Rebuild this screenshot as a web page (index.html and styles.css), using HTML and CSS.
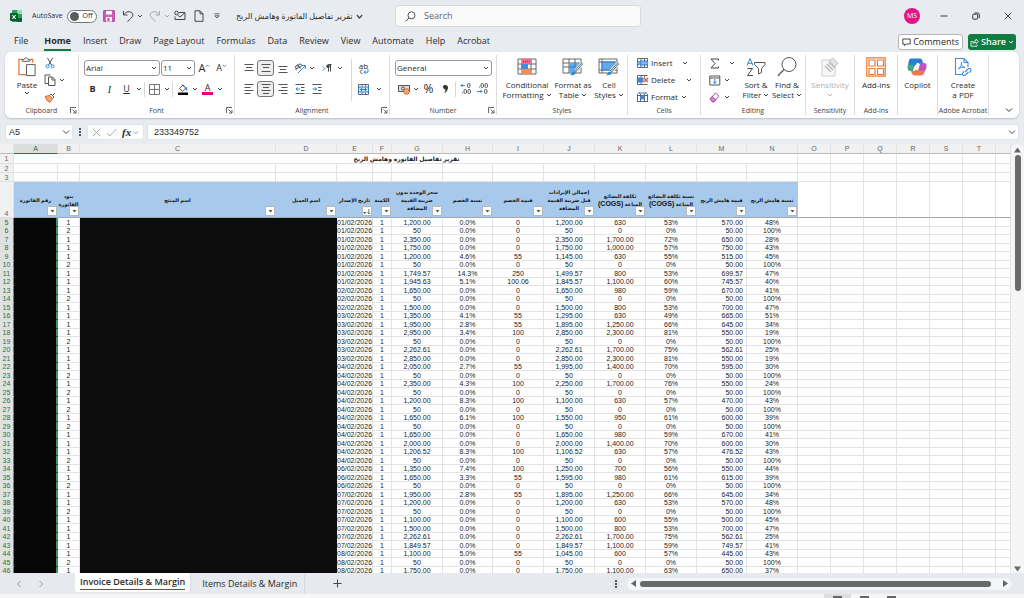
FILE: index.html
```html
<!DOCTYPE html>
<html lang="en">
<head>
<meta charset="utf-8">
<title>Invoice Details &amp; Margin</title>
<link rel="stylesheet" href="styles.css">
</head>
<body>
<svg class="defs" aria-hidden="true">
  <symbol id="chev" viewBox="0 0 6 6"><path d="M1 2l2 2 2-2" fill="none" stroke="#444" stroke-width="1"/></symbol>
  <symbol id="launch" viewBox="0 0 7 7"><path d="M.5 6V.5H6M2.500 2.500L6 6M6 3v3H3" fill="none" stroke="#555" stroke-width=".9"/></symbol>
</svg>

<header class="titlebar">
  <svg class="logo" width="12" height="12" viewBox="0 0 12 12"><rect x="2" width="10" height="12" rx="1" fill="#21a366"/><path d="M7 0h4a1 1 0 0 1 1 1v3H7z" fill="#8fe0a8"/><path d="M7 8h5v3a1 1 0 0 1-1 1H7z" fill="#185c37"/><rect y="3" width="8" height="8" rx="1" fill="#0b5a31"/><path d="M2.300 5l3.400 4M5.700 5L2.300 9" stroke="#fff" stroke-width="1.100"/></svg>
  <label class="autosave">AutoSave <input type="checkbox" class="toggle-input"><span class="toggle"><i></i>Off</span></label>
  <button class="qa" aria-label="Save"><svg width="12" height="12" viewBox="0 0 12 12"><path d="M.7.700h10.600v10.600H.7z" fill="#d65cc0" stroke="#a33f96"/><path d="M3 1h6v3.500H3z" fill="#fff"/><path d="M3 7h6v4.500H3z" fill="#fff"/><path d="M4.500 8v3h2V8" fill="#b146a5"/></svg></button>
  <button class="qa undo" aria-label="Undo"><svg width="12" height="12" viewBox="0 0 12 12"><path d="M1.500 1v4h4M1.700 4.700C4 1.500 8 .8 10 3c2 2.500 0 4.500-4.500 8.500" fill="none" stroke="#444"/></svg><svg width="6" height="6"><use href="#chev"/></svg></button>
  <button class="qa undo faded" aria-label="Redo"><svg width="12" height="12" viewBox="0 0 12 12"><path d="M10.500 1v4h-4M10.300 4.700C8 1.500 4 .8 2 3c-2 2.500 0 4.500 4.500 8.500" fill="none" stroke="#444"/></svg><svg width="6" height="6"><use href="#chev"/></svg></button>
  <button class="qa mail" aria-label="Email"><svg width="12" height="12" viewBox="0 0 12 12"><path d="M5 2.500h6v7H1v-3M11 2.500L6 7 3.500 5" fill="none" stroke="#444"/><circle cx="2.500" cy="3" r="1.800" fill="none" stroke="#444"/></svg></button>
  <button class="qa newf" aria-label="New"><svg width="10" height="12" viewBox="0 0 10 12"><path d="M1 .8h5l3 3v7.500H1zM6 .8v3h3" fill="none" stroke="#444"/></svg></button>
  <button class="qa cust" aria-label="Customize"><svg width="6" height="6" viewBox="0 0 6 6"><path d="M.5.800h5M.8 2.800h4.400L3 5z" fill="none" stroke="#444" stroke-width=".8"/></svg></button>
  <button class="doc"><span dir="rtl" lang="ar">تقرير تفاصيل الفاتورة وهامش الربح</span><svg width="9" height="9" viewBox="0 0 6 6"><path d="M1.200 2l1.800 2 1.800-2" fill="none" stroke="#444" stroke-width=".8"/></svg></button>
  <label class="search"><svg width="11" height="11" viewBox="0 0 11 11"><circle cx="6.500" cy="4.300" r="3.500" fill="none" stroke="#555"/><path d="M4 7L.8 10.300" stroke="#555"/></svg><input type="search" placeholder="Search" aria-label="Search"></label>
  <div class="window">
    <span class="avatar">MS</span>
    <button aria-label="Minimize"><svg width="8" height="8" viewBox="0 0 8 8"><path d="M.5 4h7" stroke="#333"/></svg></button>
    <button aria-label="Restore"><svg width="8" height="8" viewBox="0 0 8 8"><rect x=".7" y="2.200" width="5" height="5" rx="1" fill="none" stroke="#333"/><path d="M2.500 1h3.300a1.500 1.500 0 0 1 1.500 1.500V6" fill="none" stroke="#333"/></svg></button>
    <button aria-label="Close"><svg width="8" height="8" viewBox="0 0 8 8"><path d="M.8.800l6.400 6.400M7.200.800L.8 7.200" stroke="#333" stroke-width=".9"/></svg></button>
  </div>
</header>

<nav class="tabs">
  <button>File</button><button class="on">Home</button><button>Insert</button><button>Draw</button><button>Page Layout</button><button>Formulas</button><button>Data</button><button>Review</button><button>View</button><button>Automate</button><button>Help</button><button>Acrobat</button>
  <div class="tab-actions">
    <button class="comments"><svg width="9" height="9" viewBox="0 0 9 9"><path d="M.8 1h7.400v5H4L2.300 7.800V6H.8z" fill="none" stroke="#333" stroke-width=".9"/></svg>Comments</button>
    <button class="share"><svg width="9" height="9" viewBox="0 0 9 9"><path d="M3 3.500H1v4.700h6V6.500M3 5.500C3.200 3.500 4.500 2.700 6 2.700V1l2.500 2.500L6 5.500V4.300C4.500 4.300 3.700 4.700 3 5.500z" fill="none" stroke="#fff" stroke-width=".8"/></svg>Share<svg width="6" height="6" viewBox="0 0 6 6"><path d="M1 2l2 2 2-2" fill="none" stroke="#fff"/></svg></button>
  </div>
</nav>

<section class="ribbon">
  <div class="group g-clip">
    <div class="body">
      <button class="big paste"><svg width="20" height="21" viewBox="0 0 20 21"><path d="M5 2.500H1.500v16H9M13 2.500h3V6" fill="none" stroke="#e8793a" stroke-width="1.300"/><path d="M5 4.500v-2h2.200C7.500.200 10.500.200 10.800 2.500H13v2z" fill="#fff" stroke="#555"/><path d="M9.500 8h9v11.500h-9z" fill="#fff" stroke="#555"/></svg><span>Paste</span><svg width="6" height="6"><use href="#chev"/></svg></button>
      <div class="stack">
        <button aria-label="Cut"><svg width="12" height="12" viewBox="0 0 12 12"><path d="M3.500 1l4 7M8.500 1l-4 7" stroke="#555"/><circle cx="3.500" cy="9.300" r="1.500" fill="none" stroke="#2b88d8"/><circle cx="8.500" cy="9.300" r="1.500" fill="none" stroke="#2b88d8"/></svg></button>
        <button aria-label="Copy"><svg width="12" height="12" viewBox="0 0 12 12"><path d="M4.500 9.500H1V1h5.500M4.500 3h4L11 5.500v6H4.500zM8 3v3h3" fill="none" stroke="#555"/></svg><svg width="6" height="6"><use href="#chev"/></svg></button>
        <button aria-label="Format painter"><svg width="12" height="12" viewBox="0 0 12 12"><path d="M1 5.500l4.500-1 3 3L6 11.300 3 9.500z" fill="#f4a477" stroke="#e06a2c"/><path d="M5.500 4.500L7 3l3 3-1.500 1.500M8.500 4.500L11 2" fill="none" stroke="#555"/></svg></button>
      </div>
    </div>
    <div class="label">Clipboard<svg class="launch" width="7" height="7"><use href="#launch"/></svg></div>
  </div>

  <div class="group g-font">
    <div class="body rows">
      <div class="line">
        <span class="combo w-font"><select aria-label="Font"><option>Arial</option></select><svg width="6" height="6"><use href="#chev"/></svg></span>
        <span class="combo w-size"><select aria-label="Font size"><option>11</option></select><svg width="6" height="6"><use href="#chev"/></svg></span>
        <button class="s17 grow">A<svg width="5" height="5" viewBox="0 0 5 5"><path d="M1 3.500L2.500 2 4 3.500" fill="none" stroke="#2b88d8"/></svg></button>
        <button class="s17 shrink">A<svg width="5" height="5" viewBox="0 0 5 5"><path d="M1 2l1.500 1.500L4 2" fill="none" stroke="#2b88d8"/></svg></button>
      </div>
      <div class="line">
        <button class="s17"><b>B</b></button><button class="s17"><i class="it">I</i></button><button class="s17"><u>U</u></button><button class="s8" aria-label="Underline options"><svg width="6" height="6"><use href="#chev"/></svg></button>
        <span class="vr"></span>
        <button class="s17" aria-label="Borders"><svg width="11" height="11" viewBox="0 0 11 11"><path d="M.5.500h10v10H.5zM5.500.500v10M.5 5.500h10" fill="none" stroke="#777"/></svg></button><button class="s8" aria-label="Border options"><svg width="6" height="6"><use href="#chev"/></svg></button>
        <span class="vr"></span>
        <button class="s17" aria-label="Fill"><svg width="12" height="12" viewBox="0 0 12 12"><path d="M2.500 5.500L6 2l3 3-3.500 3.300zM5 1.500l3 3" fill="none" stroke="#555"/><path d="M9.500 4.500v3" stroke="#2b88d8" stroke-width="1.500"/><path d="M1 9.500h10V12H1z" fill="#000"/></svg></button><button class="s8" aria-label="Fill options"><svg width="6" height="6"><use href="#chev"/></svg></button>
        <button class="s17 fcolor">A</button><button class="s8" aria-label="Color options"><svg width="6" height="6"><use href="#chev"/></svg></button>
      </div>
    </div>
    <div class="label">Font<svg class="launch" width="7" height="7"><use href="#launch"/></svg></div>
  </div>

  <div class="group g-align">
    <div class="body">
      <div class="rows main">
        <div class="line">
          <button class="s17" aria-label="Top"><svg width="10" height="10" viewBox="0 0 10 10"><path d="M.5 1.500h9M2 4.500h6M.5 7.500h9" stroke="#555"/></svg></button>
          <button class="s17 sel" aria-label="Middle"><svg width="10" height="10" viewBox="0 0 10 10"><path d="M.5 1.500h9M2 4.500h6M.5 8.500h9" stroke="#555"/></svg></button>
          <button class="s17" aria-label="Bottom"><svg width="10" height="10" viewBox="0 0 10 10"><path d="M.5 3.500h9M2 6.500h6M.5 9.500h9" stroke="#555"/></svg></button>
          <button class="s17" aria-label="Orientation"><svg width="12" height="12" viewBox="0 0 12 12"><path d="M4 11l7-7M8 3.500h3.300V7" fill="none" stroke="#2b88d8"/><circle cx="3" cy="5" r="1.500" fill="none" stroke="#555"/><circle cx="6" cy="3.500" r="1.500" fill="none" stroke="#555"/><path d="M3.500 2l3 5M1 7l2 1" stroke="#555" stroke-width=".8"/></svg></button><button class="s8" aria-label="Orientation options"><svg width="6" height="6"><use href="#chev"/></svg></button>
          <button class="s17 para" aria-label="Direction"><svg width="11" height="10" viewBox="0 0 11 10"><path d="M.8 3.500l2 2-2 2" fill="none" stroke="#2b88d8"/><path d="M6.500 8.500v-7H9.500M8.500 1.500v7" fill="none" stroke="#444"/><circle cx="6" cy="3.300" r="1.800" fill="#444"/></svg></button><button class="s8" aria-label="Direction options"><svg width="6" height="6"><use href="#chev"/></svg></button>
        </div>
        <div class="line">
          <button class="s17" aria-label="Left"><svg width="10" height="10" viewBox="0 0 10 10"><path d="M.5.500h9M.5 3.500h6M.5 6.500h9M.5 9.500h6" stroke="#555"/></svg></button>
          <button class="s17 sel" aria-label="Center"><svg width="10" height="10" viewBox="0 0 10 10"><path d="M.5.500h9M2 3.500h6M.5 6.500h9M2 9.500h6" stroke="#555"/></svg></button>
          <button class="s17" aria-label="Right"><svg width="10" height="10" viewBox="0 0 10 10"><path d="M.5.500h9M3.500 3.500h6M.5 6.500h9M3.500 9.500h6" stroke="#555"/></svg></button>
          <button class="s17" aria-label="Decrease indent"><svg width="10" height="10" viewBox="0 0 10 10"><path d="M.5.500h9M6 3.500h3.500M6 6.500h3.500M.5 9.500h9" stroke="#555"/><path d="M5 5H1M2.500 3.300L1 5l1.500 1.700" fill="none" stroke="#2b88d8"/></svg></button>
          <button class="s17" aria-label="Increase indent"><svg width="10" height="10" viewBox="0 0 10 10"><path d="M.5.500h9M6 3.500h3.500M6 6.500h3.500M.5 9.500h9" stroke="#555"/><path d="M.5 5h4M3 3.300L4.500 5 3 6.700" fill="none" stroke="#2b88d8"/></svg></button>
        </div>
      </div>
      <span class="vr tall"></span>
      <div class="rows">
        <div class="line"><button class="s17 wrap">ab<svg width="10" height="6" viewBox="0 0 10 6"><path d="M3.500 1.200C.5.500.5 5 3.500 4.400" fill="none" stroke="#555"/><path d="M9 0v3.200H5M6.500 1.500L5 3.200l1.500 1.700" fill="none" stroke="#2b88d8"/></svg></button></div>
        <div class="line"><button class="s17" aria-label="Merge"><svg width="11" height="11" viewBox="0 0 11 11"><path d="M.5.500h10v10H.5zM4 .5v2M7.500.500v2M4 8.500v2M7.500 8.500v2" fill="none" stroke="#666"/><path d="M.5 3h10v5H.5z" fill="#cfe4f7" stroke="#2b7cd3"/><path d="M2.500 5.500h6M4 4L2.500 5.500 4 7M7 4l1.500 1.500L7 7" fill="none" stroke="#2b7cd3"/></svg></button><button class="s12" aria-label="Merge options"><svg width="6" height="6"><use href="#chev"/></svg></button></div>
      </div>
    </div>
    <div class="label">Alignment<svg class="launch" width="7" height="7"><use href="#launch"/></svg></div>
  </div>

  <div class="group g-num">
    <div class="body rows">
      <div class="line"><span class="combo w-num"><select aria-label="Number format"><option>General</option></select><svg width="6" height="6"><use href="#chev"/></svg></span></div>
      <div class="line">
        <button class="s17" aria-label="Accounting"><svg width="12" height="11" viewBox="0 0 12 11"><path d="M.5 1.500h11v6H.5z" fill="#ddd" stroke="#555"/><circle cx="5" cy="4.500" r="1.500" fill="none" stroke="#555"/><ellipse cx="8.500" cy="6" rx="2.500" ry="1.200" fill="#f4a477" stroke="#e06a2c" stroke-width=".8"/><path d="M6 6v3c0 1.800 5 1.800 5 0V6" fill="#f4a477" stroke="#e06a2c" stroke-width=".8"/></svg></button><button class="s8" aria-label="Accounting options"><svg width="6" height="6"><use href="#chev"/></svg></button>
        <button class="s17 pct">%</button><button class="s17" aria-label="Comma style"><svg width="7" height="10" viewBox="0 0 7 10"><path d="M1 2.500C1 .5 6 0 6 3.500 6 6.500 4 8.500 2 9.500c1-1.500 1.500-2.500 1.500-4C2 5.500 1 4.500 1 2.500z" fill="#333"/></svg></button><span class="vr"></span>
        <button class="s17" aria-label="Increase decimal"><svg width="11" height="12" viewBox="0 0 11 12"><path d="M5 2.500H1M2.500 1L1 2.500 2.500 4" fill="none" stroke="#2b88d8"/><rect x="7.500" y=".5" width="2.500" height="4" rx="1.200" fill="none" stroke="#555"/><rect x="4" y="6.500" width="2.500" height="4" rx="1.200" fill="none" stroke="#555"/><rect x="8" y="6.500" width="2.500" height="4" rx="1.200" fill="none" stroke="#555"/><path d="M2 10h1" stroke="#555"/></svg></button>
        <button class="s17" aria-label="Decrease decimal"><svg width="11" height="12" viewBox="0 0 11 12"><path d="M0 8.500h5M3.500 7L5 8.500 3.500 10" fill="none" stroke="#2b88d8"/><rect x="4" y=".5" width="2.500" height="4" rx="1.200" fill="none" stroke="#555"/><rect x="8" y=".5" width="2.500" height="4" rx="1.200" fill="none" stroke="#555"/><rect x="7.500" y="6.500" width="2.500" height="4" rx="1.200" fill="none" stroke="#555"/><path d="M2 4h1" stroke="#555"/></svg></button>
      </div>
    </div>
    <div class="label">Number<svg class="launch" width="7" height="7"><use href="#launch"/></svg></div>
  </div>

  <div class="group g-styles">
    <div class="body">
      <button class="big w-cond"><svg width="20" height="18" viewBox="0 0 20 18"><path d="M1 1h18v15H1zM1 6h18M1 11h18M5 1v15M14 1v15" fill="none" stroke="#666"/><path d="M5 1h9v5H5z" fill="#f2668b"/><path d="M4 6h7v5H4z" fill="#3b8ede"/><path d="M5 11h9v5H5z" fill="#f28c5a"/><path d="M6 3.500h7" stroke="#c2185b" stroke-dasharray="1 1"/></svg><span>Conditional<br>Formatting <svg width="6" height="6"><use href="#chev"/></svg></span></button>
      <button class="big w-fmt"><svg width="22" height="18" viewBox="0 0 22 18"><path d="M1 1h18v14H1zM1 5h18M1 9h18M7 1v14M13 1v14" fill="none" stroke="#666"/><path d="M7 5h12v5l-5 5H7z" fill="#63a9e6"/><path d="M7 9h12M13 5v8" stroke="#2b7cd3"/><path d="M20.500 5l-7 8" stroke="#fff" stroke-width="4"/><path d="M20.500 5L13 13.500" stroke="#555" stroke-width="2.200"/><path d="M20.500 5L13 13.500" stroke="#fff" stroke-width="1"/><path d="M7 17.500c3 0 2-4 5-4 3 1 2 4-5 4z" fill="#2b88d8"/></svg><span>Format as<br>Table <svg width="6" height="6"><use href="#chev"/></svg></span></button>
      <button class="big w-cell"><svg width="22" height="18" viewBox="0 0 22 18"><path d="M1 1h18v14H1zM1 4h18M4 1v14M1 12h18" fill="none" stroke="#666"/><path d="M4 4h13v8H4z" fill="#63a9e6" stroke="#2b7cd3"/><path d="M20.500 5l-7 8" stroke="#fff" stroke-width="4"/><path d="M20.500 5L13 13.500" stroke="#555" stroke-width="2.200"/><path d="M20.500 5L13 13.500" stroke="#fff" stroke-width="1"/><path d="M7 17.500c3 0 2-4 5-4 3 1 2 4-5 4z" fill="#2b88d8"/></svg><span>Cell<br>Styles <svg width="6" height="6"><use href="#chev"/></svg></span></button>
    </div>
    <div class="label">Styles</div>
  </div>

  <div class="group g-cells">
    <div class="body">
      <div class="stack">
        <button><svg width="11" height="10" viewBox="0 0 11 10"><path d="M.5.500h10v9H.5zM4 .5v9M7.500.500v9" fill="none" stroke="#666"/><path d="M3 3h8v4H3z" fill="#7db8ee" stroke="#2b7cd3"/><path d="M0 5h4M2 3L0 5l2 2" fill="none" stroke="#2b7cd3"/></svg><span class="t-ins">Insert</span><svg width="6" height="6"><use href="#chev"/></svg></button>
        <button><svg width="11" height="10" viewBox="0 0 11 10"><path d="M.5.500h10M.5 9.500h10M.5.500v9M4 .5v2M7.500.500v2M4 7.500v2" fill="none" stroke="#666"/><path d="M1 3h5v4H1z" fill="#3b8ede" stroke="#2b7cd3"/><path d="M7 3l4 4M11 3L7 7" stroke="#e0532c" stroke-width="1.300"/></svg><span class="t-del">Delete</span><svg width="6" height="6"><use href="#chev"/></svg></button>
        <button><svg width="11" height="10" viewBox="0 0 11 10"><path d="M.5 2v8M10.500 2v8M.5 3.500h10M.5 9.500h10M3.500 2v8M7.500 2v8" fill="none" stroke="#666"/><path d="M3.500 3.500h4v4h-4z" fill="#3b8ede"/><path d="M2 1h7M2 0v2M9 0v2" stroke="#2b7cd3"/></svg><span>Format</span><svg width="6" height="6"><use href="#chev"/></svg></button>
      </div>
    </div>
    <div class="label">Cells</div>
  </div>

  <div class="group g-edit">
    <div class="body">
      <div class="stack">
        <button aria-label="Sum"><svg width="12" height="11" viewBox="0 0 12 11"><path d="M9.500 2.500V1H2l4 4.500L2 10h7.500V8.500" fill="none" stroke="#444"/></svg><svg class="gap" width="6" height="6"><use href="#chev"/></svg></button>
        <button aria-label="Fill down"><svg width="12" height="11" viewBox="0 0 12 11"><path d="M.8 1h10v9h-10zM.8 3h10" fill="none" stroke="#555"/><path d="M5.800 4v4.500M4 6.800l1.800 1.700 1.800-1.700" fill="none" stroke="#2b88d8"/></svg><svg width="6" height="6"><use href="#chev"/></svg></button>
        <button aria-label="Clear"><svg width="12" height="11" viewBox="0 0 12 11"><path d="M1 7l5.500-6L10 4.200 5 9.800H3.500z" fill="#fff" stroke="#a94aa8"/><path d="M1 7l2-2.300 3.800 3L5 9.800H3.500z" fill="#d08acb" stroke="#a94aa8"/></svg><svg width="6" height="6"><use href="#chev"/></svg></button>
      </div>
      <button class="big w-sort"><svg width="20" height="19" viewBox="0 0 20 19"><path d="M1 8L4 1l3 7M2 5.800h4" fill="none" stroke="#2b88d8"/><path d="M1.500 11h5l-5 7h5.500" fill="none" stroke="#444"/><path d="M8.500 5h10.500v2l-3.500 4v4l-3 1.500V11L8.500 7z" fill="none" stroke="#555"/></svg><span>Sort &amp;<br>Filter <svg width="6" height="6"><use href="#chev"/></svg></span></button>
      <button class="big w-find"><svg width="20" height="20" viewBox="0 0 20 20"><circle cx="12" cy="7.500" r="7" fill="none" stroke="#555"/><path d="M7 12.500L.8 19" stroke="#555" stroke-width="1.200"/></svg><span>Find &amp;<br>Select <svg width="6" height="6"><use href="#chev"/></svg></span></button>
    </div>
    <div class="label">Editing</div>
  </div>

  <div class="group g-sens">
    <div class="body"><button class="big faded" disabled><svg width="18" height="20" viewBox="0 0 18 20"><path d="M1 3h13v16H1z" fill="#ececec" stroke="#888"/><path d="M4 9l6 6M6 7l6 6M8 5l6 6" stroke="#555" stroke-width="1.600"/><path d="M8 4l4-3 5 5-3 4z" fill="#bbb" stroke="#777"/></svg><span>Sensitivity<br><svg width="6" height="6"><use href="#chev"/></svg></span></button></div>
    <div class="label">Sensitivity</div>
  </div>
  <div class="group g-add">
    <div class="body"><button class="big"><svg width="20" height="20" viewBox="0 0 20 20"><path d="M.8.800h18.400v18.400H.8zM3 3h6v6H3zM11.500 3h6v6h-6zM3 11.500h6v6H3zM11.500 11.500h6v6h-6z" fill="none" stroke="#e8793a" stroke-width="1.200"/></svg><span>Add-ins</span></button></div>
    <div class="label">Add-ins</div>
  </div>
  <div class="group g-cop">
    <div class="body"><button class="big"><svg width="20" height="20" viewBox="0 0 20 20"><path d="M4 1.500h9c1.500 0 2 1 2.500 2.500l.7 2H10L7.500 9.500 1 9C1.500 5 2 1.500 4 1.500z" fill="#2b7fd0"/><path d="M.8 8h7L6 14H3C.5 14 .2 11 .8 8z" fill="#4aa67c"/><path d="M12 6h5c3 0 3 3 2 6l-1 2h-6.500z" fill="#bb56c4"/><path d="M4 14h3.500L9.500 10h3l-1 4h6.500c-1 3-2 4.500-4 4.500H8c-2 0-3-1-4-4.500z" fill="#ee7a4c"/><path d="M8 12l3-5h2l-2 6H8z" fill="#fff"/></svg><span>Copilot</span></button></div>
  </div>
  <div class="group g-pdf">
    <div class="body"><button class="big"><svg width="18" height="20" viewBox="0 0 18 20"><path d="M8 17.500H1.500V1.500H10l4 4V10M10 1.500v4h4" fill="none" stroke="#3b8ede" stroke-width="1.100"/><path d="M4 12c3-2 4-5 3.500-7C7 7.500 8 10 11 10.500 8.500 10 6 10.500 4 12z" fill="none" stroke="#3b8ede"/><path d="M11 15l3-3c2-1.500 4 .5 2.500 2.500l-1 1M14.500 15l-3 3c-2 1.500-4-.5-2.500-2.500l1-1" fill="none" stroke="#3b8ede" stroke-width="1.100"/></svg><span>Create<br>a PDF</span></button></div>
    <div class="label">Adobe Acrobat</div>
  </div>
  <button class="collapse" aria-label="Collapse ribbon"><svg width="8" height="8" viewBox="0 0 8 8"><path d="M1 2.500l3 3 3-3" fill="none" stroke="#333"/></svg></button>
</section>

<section class="formula">
  <label class="name"><input aria-label="Name box" value="A5"><svg width="8" height="8" viewBox="0 0 8 8"><path d="M1 2.500l3 3 3-3" fill="none" stroke="#444"/></svg></label>
  <svg class="dots" width="4" height="10" viewBox="0 0 4 10"><path d="M1 1h2v2H1zM1 4h2v2H1zM1 7h2v2H1z" fill="#555"/></svg>
  <div class="fx">
    <button aria-label="Cancel"><svg width="9" height="9" viewBox="0 0 9 9"><path d="M.8.800l7.400 7.400M8.200.800L.8 8.200" stroke="#aaa"/></svg></button>
    <button aria-label="Enter"><svg width="11" height="9" viewBox="0 0 11 9"><path d="M.8 5l3 3L10.300 1" fill="none" stroke="#aaa"/></svg></button>
    <button class="fxb">fx</button>
    <svg width="7" height="7" viewBox="0 0 8 8"><path d="M1 2.500l3 3 3-3" fill="none" stroke="#999"/></svg>
  </div>
  <label class="value"><input aria-label="Formula bar" value="233349752"><svg width="8" height="8" viewBox="0 0 8 8"><path d="M1 2.500l3 3 3-3" fill="none" stroke="#444"/></svg></label>
</section>

<main class="sheet">
  <div class="grid">
    <table>
      <colgroup><col class="c-h"><col class="c-a"><col class="c-b"><col class="c-c"><col class="c-d"><col class="c-e"><col class="c-f"><col class="c-m"><col class="c-n"><col class="c-m"><col class="c-m"><col class="c-m"><col class="c-m"><col class="c-n"><col class="c-m"><col class="c-o"><col class="c-o"><col class="c-o"><col class="c-o"><col class="c-o"><col class="c-o"><col></colgroup>
      <thead><tr class="letters"><th class="corner"></th><th class="cur">A</th><th>B</th><th>C</th><th>D</th><th>E</th><th>F</th><th>G</th><th>H</th><th>I</th><th>J</th><th>K</th><th>L</th><th>M</th><th>N</th><th>O</th><th>P</th><th>Q</th><th>R</th><th>S</th><th>T</th><th></th></tr></thead>
      <tbody id="top"></tbody>
      <tbody id="data"></tbody>
    </table>
  </div>
  <div class="vscroll"><svg width="7" height="6" viewBox="0 0 7 6"><path d="M3.500.500L7 5.500H0z" fill="#666"/></svg><i></i><span></span><svg width="7" height="6" viewBox="0 0 7 6"><path d="M3.500 5.500L7 .5H0z" fill="#666"/></svg></div>
</main>

<footer class="sheets">
  <button class="arrow" aria-label="Previous sheet"><svg width="6" height="8" viewBox="0 0 6 8"><path d="M4.500 1l-3 3 3 3" fill="none" stroke="#999"/></svg></button>
  <button class="arrow" aria-label="Next sheet"><svg width="6" height="8" viewBox="0 0 6 8"><path d="M1.500 1l3 3-3 3" fill="none" stroke="#999"/></svg></button>
  <button class="tab on"><span>Invoice Details &amp; Margin</span></button>
  <button class="tab">Items Details &amp; Margin</button>
  <button class="plus" aria-label="New sheet"><svg width="9" height="9" viewBox="0 0 9 9"><path d="M4.500.500v8M.5 4.500h8" stroke="#444"/></svg></button>
  <div class="hscroll">
    <svg class="dots" width="4" height="10" viewBox="0 0 4 10"><path d="M1 1h2v2H1zM1 4h2v2H1zM1 7h2v2H1z" fill="#555"/></svg>
    <div class="track"><svg width="5" height="7" viewBox="0 0 5 7"><path d="M0 3.500L5 0v7z" fill="#666"/></svg><i></i><svg width="5" height="7" viewBox="0 0 5 7"><path d="M5 3.500L0 0v7z" fill="#666"/></svg></div>
  </div>
</footer>
<div class="status"><span class="view on"><i></i></span><span class="view"><i></i></span><span class="view"><i></i></span></div>
<script src="sheet.js"></script>
</body>
</html>
```
FILE: styles.css
```css
* { box-sizing: border-box; }
body { margin: 0; height: 100vh; display: flex; flex-direction: column; overflow: hidden; background: #e8ecf1; color: #2b2b2b; font: 8px/10px "Open Sans", "Noto Sans", sans-serif; }
button { border: 0; background: none; padding: 0; margin: 0; font: inherit; color: inherit; display: flex; align-items: center; justify-content: center; }
input, select { font: inherit; color: inherit; border: 0; background: none; padding: 0; margin: 0; outline: 0; min-width: 0; }
svg { flex: none; display: block; }
.defs { position: absolute; width: 0; height: 0; }
.faded { opacity: .4; }

/* title bar */
.titlebar { flex: none; height: 32px; display: flex; align-items: center; padding-left: 10px; position: relative; }
.autosave { display: flex; align-items: center; margin-left: 10px; font-size: 7px; gap: 4px; }
.toggle-input { position: absolute; opacity: 0; }
.toggle { display: flex; align-items: center; gap: 4px; width: 30px; height: 13px; border: 1px solid #777; border-radius: 7px; background: #fff; padding-left: 2px; }
.toggle i { width: 9px; height: 9px; border-radius: 50%; background: #5c5c5c; }
.qa { margin-left: 6px; }
.undo { gap: 3px; margin-left: 7px; }
.undo.faded { margin-left: 6px; }
.mail { margin-left: 4px; }
.newf { margin-left: 8px; }
.cust { margin-left: 10px; }
.doc { margin-left: 15px; gap: 2px; font: 8px/12px "Noto Sans", "DejaVu Sans", sans-serif; width: 129px; justify-content: flex-end; white-space: nowrap; }
.search { position: absolute; left: 395px; width: 24%; height: 22px; top: 5px; display: flex; align-items: center; gap: 8px; padding-left: 9px; background: #fafafa; border: 1px solid #d5d8dc; border-radius: 3px; font-size: 9px; }
.search input { flex: 1; appearance: none; }
.search input::placeholder { color: #666; opacity: 1; }
.window { margin-left: auto; display: flex; align-items: center; padding-right: 12px; gap: 24px; }
.avatar { width: 16px; height: 16px; border-radius: 50%; background: #e3128b; color: #fff; font-size: 7px; line-height: 16px; text-align: center; margin-right: -4px; }

/* ribbon tabs */
.tabs { flex: none; height: 20px; display: flex; align-items: center; padding-left: 14px; gap: 12px; font-size: 9px; }
.tabs > button { height: 18px; border-bottom: 2px solid transparent; }
.tabs > button.on { font-weight: 700; border-bottom-color: #107c41; }
.tabs > button:first-child { margin-right: 4px; }
.tab-actions { margin-left: auto; display: flex; gap: 5px; padding-right: 8px; }
.comments, .share { height: 16px; border-radius: 3px; gap: 2px; padding: 0 3px; }
.comments { border: 1px solid #b5b5b5; background: #fff; }
.share { background: #107c41; color: #fff; font-weight: 600; padding: 0 2px; }

/* ribbon */
.ribbon { flex: none; margin: 0 5px; height: 66px; background: #fff; border-radius: 6px; display: flex; box-shadow: 0 1px 2px #b9bec4; }
.group { flex: none; display: flex; flex-direction: column; margin: 3px 0; border-right: 1px solid #dcdcdc; }
.body { height: 52px; display: flex; padding: 2px 0 0 5px; }
.label { font-size: 7px; line-height: 9px; text-align: center; color: #444; position: relative; white-space: nowrap; }
.launch { position: absolute; right: 1px; top: 1px; }
.g-clip { width: 74px; }
.g-font { width: 156px; }
.g-align { width: 155px; }
.g-num { width: 107px; }
.g-styles { width: 131px; }
.g-cells { width: 73px; }
.g-edit { width: 105px; }
.g-sens { width: 49px; }
.g-add { width: 43px; }
.g-cop { width: 40px; }
.g-pdf { width: 51px; }
.big { flex-direction: column; justify-content: flex-start; align-items: center; white-space: nowrap; }
.big > svg:first-child { height: 20px; margin-bottom: 3px; }
.big span svg { display: inline-block; }
.g-sens .body, .g-add .body, .g-cop .body, .g-pdf .body { padding-left: 0; justify-content: center; }
.paste { width: 34px; }
.stack { display: flex; flex-direction: column; justify-content: space-between; height: 46px; }
.stack button { justify-content: flex-start; height: 12px; gap: 3px; }
.gap { margin-left: 5px; }
.rows { display: flex; flex-direction: column; gap: 3px; padding-top: 2px; }
.body.rows { padding-top: 4px; }
.line { display: flex; align-items: center; height: 18px; }
.combo { display: flex; align-items: center; height: 16px; border: 1px solid #999; border-radius: 3px; padding: 0 2px 0 1px; margin-right: 1px; }
.combo select { flex: 1; appearance: none; }
.w-font { width: 76px; }
.w-size { width: 34px; }
.w-num { width: 97px; }
.s17 { width: 17px; height: 16px; }
.s8 { width: 8px; height: 16px; }
.s12 { width: 13px; height: 16px; }
.line b, .line u { font-size: 9px; }
.it { font: italic 10px "Liberation Serif", serif; }
.vr { width: 1px; height: 15px; background: #d8d8d8; margin: 0 1px; }
.tall { height: 42px; margin: 2px 3px 0; }
.grow { font-size: 11px; }
.shrink { font-size: 9px; }
.grow svg, .shrink svg { margin-bottom: 6px; }
.fcolor { font-size: 9px; line-height: 9px; position: relative; padding-bottom: 3px; }
.fcolor::after { content: ""; position: absolute; left: 3px; right: 3px; bottom: 2px; height: 3px; background: #e6007e; }
.sel { border: 1px solid #777; border-radius: 3px; background: #eee; }
.para { margin-left: 3px; }
.main { width: 108px; }
.wrap { flex-direction: column; line-height: 7px; }
.pct { font-size: 12px; }
.g-styles .body { padding-left: 4px; }
.w-cond { width: 52px; }
.w-fmt { width: 40px; }
.w-cell { width: 32px; }
.g-cells .body { padding-left: 9px; }
.t-ins { width: 28px; text-align: left; }
.t-del { width: 32px; text-align: left; }
.g-edit .body { padding-left: 8px; }
.w-sort { width: 32px; margin-left: 5px; }
.w-find { width: 30px; }
.collapse { margin: auto 6px 4px auto; }

/* formula bar */
.formula { flex: none; display: flex; align-items: center; height: 16px; margin: 6px 5px 0; gap: 4px; font-family: "Liberation Sans", Arial, sans-serif; font-size: 9px; }
.name, .fx, .value { height: 16px; background: #fff; border: 1px solid #dfe2e6; border-radius: 3px; display: flex; align-items: center; }
.name { width: 68px; padding: 0 2px 0 3px; }
.name input, .value input { flex: 1; }
.formula > .dots { margin: 0 1px; }
.fx { width: 57px; gap: 5px; padding-left: 4px; }
.fxb { font: italic 700 11px "Liberation Serif", serif; }
.fx > svg { margin-left: -4px; }
.value { flex: 1; padding: 0 2px 0 6px; margin-left: -1px; }

/* sheet */
.sheet { flex: 1; min-height: 0; display: flex; margin-top: 4px; }
.grid { flex: 1; min-width: 0; overflow: hidden; background: #fff; }
table { table-layout: fixed; width: 100%; border-spacing: 0; font: 7px/7px "Liberation Sans", Arial, "DejaVu Sans", sans-serif; color: #222; }
.c-h { width: 14px; }
.c-a { width: 44px; }
.c-b { width: 22px; }
.c-c { width: 196px; }
.c-d { width: 61px; }
.c-e { width: 36px; }
.c-f { width: 19px; }
.c-m { width: 51px; }
.c-n { width: 50px; }
.c-o { width: 33px; }
td, th { padding: 0; border-right: 1px solid #e3e3e3; border-bottom: 1px solid #e3e3e3; text-align: center; font-weight: 400; white-space: nowrap; }
.letters th { height: 10px; line-height: 9px; background: #f1f1f1; color: #666; border-bottom-color: #bbb; }
.letters .cur { background: #dcdedd; color: #217346; border-bottom: 1px solid #107c41; }
tbody th { background: #f1f1f1; color: #666; border-bottom-color: #ddd; }
.r1 { height: 10px; }
.r2 { height: 9px; }
.title { font-weight: 700; font-size: 6px; line-height: 8px; }
.heads th { vertical-align: bottom; }
.heads td { background: #a6c9ec; border-right-color: #a6c9ec; border-bottom-color: #a6a6a6; }
.heads td.plain { background: #fff; border-right-color: #e3e3e3; }
.head { height: 35px; display: flex; align-items: center; justify-content: center; position: relative; font-weight: 700; font-size: 5px; line-height: 8px; color: #111; direction: rtl; }
.head bdi { font-size: 7px; }
.head button { position: absolute; right: 0; bottom: 1px; width: 10px; height: 10px; background: #fff; border: 1px solid #b8b8b8; }
#data tr { height: 8px; }
#data tr:nth-child(odd) { height: 9px; }
#data th { background: #dfe2e1; color: #217346; border-right: 1px solid #3f9467; }
#data td.hid { background: #0c0c0c; border-color: #0c0c0c; }
#data td.id { background: #060606; border-right: 2px solid #3f9467; border-bottom-color: #060606; }
#data td.right { text-align: right; padding-right: 3px; }
.vscroll { flex: none; width: 13px; background: #f4f5f6; display: flex; flex-direction: column; align-items: center; padding: 3px 0 1px; border-radius: 6px 6px 0 0; }
.vscroll i { width: 6px; height: 136px; background: #6a6a6a; border-radius: 3px; margin-top: 2px; }
.vscroll span { flex: 1; }

/* sheet tabs */
.sheets { flex: none; height: 21px; display: flex; align-items: center; font-size: 9px; background: #e6eaef; padding-left: 15px; }
.arrow { width: 8px; margin-right: 14px; }
.tab { height: 20px; padding: 0 7px; border-right: 1px solid #d5d8dc; }
.tab.on { background: #fff; font-weight: 600; border-radius: 0 0 3px 3px; padding: 0 5px; height: 19px; align-self: flex-start; margin-right: 4px; }
.tab.on span { border-bottom: 1px solid #107c41; line-height: 14px; }
.arrow + .tab { margin-left: 16px; }
.plus { margin-left: 28px; }
.hscroll { margin-left: auto; width: 41%; display: flex; align-items: center; gap: 9px; padding-left: 4px; }
.track { flex: 1; display: flex; align-items: center; gap: 4px; height: 12px; padding: 0 4px; margin-right: 12px; background: #f5f6f7; border-radius: 6px; }
.track i { flex: 1; height: 6px; margin-right: 8px; background: #6a6a6a; border-radius: 3px; }
.status { flex: none; height: 4px; background: #f6f6f6; display: flex; justify-content: flex-end; padding-right: 119px; }
.view { width: 27px; display: flex; justify-content: center; align-items: flex-end; }
.view.on { background: #dedede; }
.view i { width: 9px; height: 2px; background: #666; }
```
FILE: sheet.js
```js
const arrow = '<svg width="5" height="4" viewBox="0 0 5 4"><path d="M.5 1h4l-2 2.500z" fill="#555"/></svg>';
const sorted = '<svg width="8" height="7" viewBox="0 0 8 7"><path d="M0 4h3.500L1.700 6z" fill="#555"/><path d="M5.800 1v5M4.500 4.500L5.800 6 7 4.500" fill="none" stroke="#555" stroke-width=".8"/></svg>';
const heads = [
  'رقم الفاتورة', 'بنود<br>الفاتورة', 'اسم المنتج', 'اسم العميل', 'تاريخ الإصدار', 'الكمية',
  'سعر الوحدة بدون<br>ضريبة القيمة<br>المضافة', 'نسبة الخصم', 'قيمة الخصم',
  'إجمالي الإيرادات<br>قبل ضريبة القيمة<br>المضافة', 'تكلفة البضائع<br>المباعة <bdi>(COGS)</bdi>',
  'نسبة تكلفة البضائع<br>المباعة <bdi>(COGS)</bdi>', 'قيمة هامش الربح', 'نسبة هامش الربح'
];
const blanks = (n, cls = '') => `<td class="${cls}"></td>`.repeat(n);
document.getElementById('top').innerHTML =
  `<tr class="r1"><th>1</th><td colspan="14" class="title" dir="rtl">تقرير تفاصيل الفاتورة وهامش الربح</td>${blanks(7)}</tr>` +
  `<tr class="r2"><th>2</th>${blanks(21)}</tr><tr class="r2"><th>3</th>${blanks(21)}</tr>` +
  `<tr class="heads"><th>4</th>${heads.map((h, i) => `<td><div class="head"><span>${h}</span><button aria-label="Filter">${i === 4 ? sorted : arrow}</button></div></td>`).join('')}${blanks(7, 'plain')}</tr>`;

// Day | unit price | discount % | discount | revenue | COGS | COGS % | margin | margin %
// A line holding only a day is a delivery line.
const rows = `01|1,200.00|0.0%|0|1,200.00|630|53%|570.00|48%
01
01|2,350.00|0.0%|0|2,350.00|1,700.00|72%|650.00|28%
01|1,750.00|0.0%|0|1,750.00|1,000.00|57%|750.00|43%
01|1,200.00|4.6%|55|1,145.00|630|55%|515.00|45%
01
01|1,749.57|14.3%|250|1,499.57|800|53%|699.57|47%
01|1,945.63|5.1%|100.06|1,845.57|1,100.00|60%|745.57|40%
02|1,650.00|0.0%|0|1,650.00|980|59%|670.00|41%
02
02|1,500.00|0.0%|0|1,500.00|800|53%|700.00|47%
03|1,350.00|4.1%|55|1,295.00|630|49%|665.00|51%
03|1,950.00|2.8%|55|1,895.00|1,250.00|66%|645.00|34%
03|2,950.00|3.4%|100|2,850.00|2,300.00|81%|550.00|19%
03
03|2,262.61|0.0%|0|2,262.61|1,700.00|75%|562.61|25%
03|2,850.00|0.0%|0|2,850.00|2,300.00|81%|550.00|19%
04|2,050.00|2.7%|55|1,995.00|1,400.00|70%|595.00|30%
04
04|2,350.00|4.3%|100|2,250.00|1,700.00|76%|550.00|24%
04
04|1,200.00|8.3%|100|1,100.00|630|57%|470.00|43%
04
04|1,650.00|6.1%|100|1,550.00|950|61%|600.00|39%
04
04|1,650.00|0.0%|0|1,650.00|980|59%|670.00|41%
04|2,000.00|0.0%|0|2,000.00|1,400.00|70%|600.00|30%
04|1,206.52|8.3%|100|1,106.52|630|57%|476.52|43%
04
06|1,350.00|7.4%|100|1,250.00|700|56%|550.00|44%
06|1,650.00|3.3%|55|1,595.00|980|61%|615.00|39%
06
07|1,950.00|2.8%|55|1,895.00|1,250.00|66%|645.00|34%
07|1,200.00|0.0%|0|1,200.00|630|53%|570.00|48%
07
07|1,100.00|0.0%|0|1,100.00|600|55%|500.00|45%
07|1,500.00|0.0%|0|1,500.00|800|53%|700.00|47%
07|2,262.61|0.0%|0|2,262.61|1,700.00|75%|562.61|25%
07|1,849.57|0.0%|0|1,849.57|1,100.00|59%|749.57|41%
08|1,100.00|5.0%|55|1,045.00|600|57%|445.00|43%
08
08|1,750.00|0.0%|0|1,750.00|1,100.00|63%|650.00|37%`.split('\n');
const delivery = '50|0.0%|0|50|0|0%|50.00|100%'.split('|');
document.getElementById('data').innerHTML = rows.map((line, i) => {
  const [day, ...rest] = line.split('|');
  const vals = rest.length ? rest : delivery;
  const cells = vals.map((v, k) => `<td${k === 6 ? ' class="right"' : ''}>${v}</td>`).join('');
  return `<tr><th>${i + 5}</th><td class="id"></td><td>${rest.length ? 1 : 2}</td><td class="hid"></td><td class="hid"></td><td>${day}/02/2026</td><td>1</td>${cells}${blanks(7)}</tr>`;
}).join('');
```
